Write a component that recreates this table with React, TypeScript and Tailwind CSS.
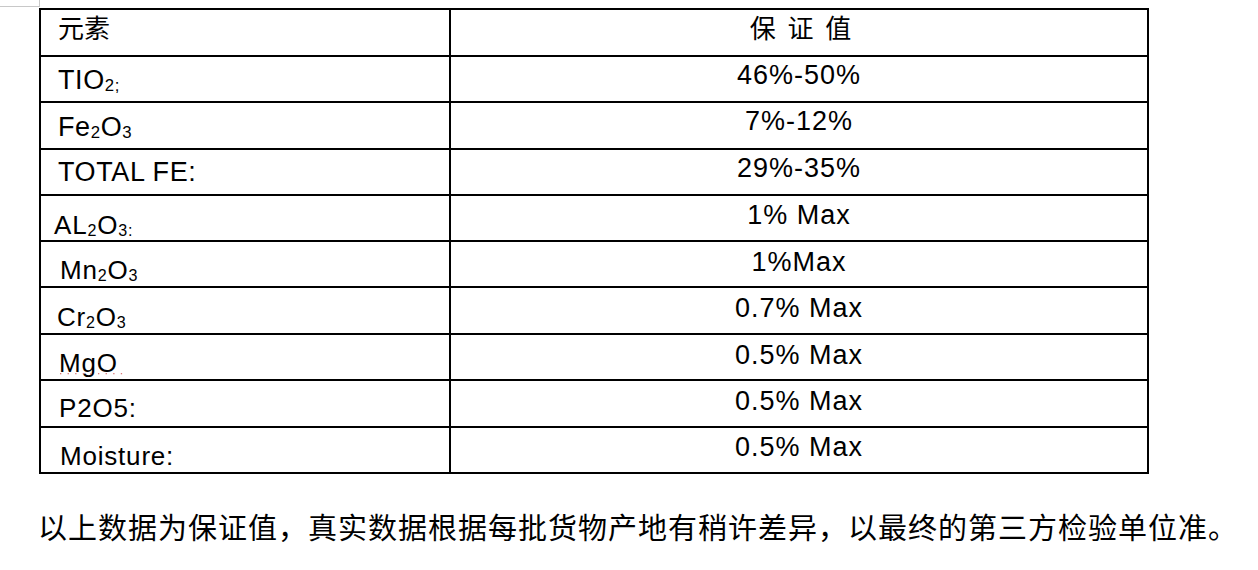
import React from "react";

type Row = {
  left: React.ReactNode;
  right: React.ReactNode;
  h: string;
  lcls: string;
  rcls: string;
};

const Sub = ({ children }: { children: React.ReactNode }) => (
  <span className="text-[0.62em] align-[-2px]">{children}</span>
);

const rows: Row[] = [
  {
    left: <span className="font-['Noto_Sans_CJK_SC',sans-serif] text-[26px]">元素</span>,
    right: (
      <span className="font-['Noto_Sans_CJK_SC',sans-serif] text-[26px] tracking-[3px]">保 证 值</span>
    ),
    h: "h-[46.7px]",
    lcls: "pt-[4px] pl-[17px]",
    rcls: "pt-[4px] pl-[6px]",
  },
  {
    left: (
      <span>
        TIO<Sub>2;</Sub>
      </span>
    ),
    right: "46%-50%",
    h: "h-[46.3px]",
    lcls: "pt-[10px] pl-[17px] text-[27px] tracking-[0.6px]",
    rcls: "pt-[5px]",
  },
  {
    left: (
      <span>
        Fe<Sub>2</Sub>O<Sub>3</Sub>
      </span>
    ),
    right: "7%-12%",
    h: "h-[47px]",
    lcls: "pt-[11px] pl-[17px] text-[27px] tracking-[0.6px]",
    rcls: "pt-[5px]",
  },
  {
    left: "TOTAL FE:",
    right: "29%-35%",
    h: "h-[46px]",
    lcls: "pt-[9px] pl-[17px] text-[27px] tracking-[0.6px]",
    rcls: "pt-[5px]",
  },
  {
    left: (
      <span>
        AL<Sub>2</Sub>O<Sub>3:</Sub>
      </span>
    ),
    right: "1% Max",
    h: "h-[45.7px]",
    lcls: "pt-[16px] pl-[13px] text-[26px] tracking-[0.8px]",
    rcls: "pt-[6px]",
  },
  {
    left: (
      <span>
        Mn<Sub>2</Sub>O<Sub>3</Sub>
      </span>
    ),
    right: "1%Max",
    h: "h-[46px]",
    lcls: "pt-[15px] pl-[19px] text-[26px] tracking-[0.8px]",
    rcls: "pt-[7px]",
  },
  {
    left: (
      <span>
        Cr<Sub>2</Sub>O<Sub>3</Sub>
      </span>
    ),
    right: "0.7% Max",
    h: "h-[47.3px]",
    lcls: "pt-[16px] pl-[16px] text-[26px] tracking-[0.8px]",
    rcls: "pt-[7px]",
  },
  {
    left: (
      <span className="relative inline-block">
        MgO
        <svg className="absolute left-0 top-[23px]" width="68" height="3" viewBox="0 0 68 3">
          {Array.from({ length: 9 }).map((_, i) => (
            <rect key={i} x={1 + i * 7.6} y={0} width={1.3} height={1.3} fill="#d97a7a" />
          ))}
        </svg>
      </span>
    ),
    right: "0.5% Max",
    h: "h-[46px]",
    lcls: "pt-[15px] pl-[18px] text-[26px] tracking-[0.8px]",
    rcls: "pt-[7px]",
  },
  {
    left: "P2O5:",
    right: "0.5% Max",
    h: "h-[46.7px]",
    lcls: "pt-[14px] pl-[18px] text-[26px] tracking-[0.8px]",
    rcls: "pt-[7px]",
  },
  {
    left: "Moisture:",
    right: "0.5% Max",
    h: "h-[46px]",
    lcls: "pt-[15px] pl-[19px] text-[26px] tracking-[0.8px]",
    rcls: "pt-[6px]",
  },
];

export default function App() {
  return (
    <div className="w-[1258px] h-[570px] bg-white text-black overflow-hidden font-['Liberation_Sans','Noto_Sans_CJK_SC',sans-serif]">
      <div className="w-[40px] h-[7px] border-r border-b border-[#c8c8c8]" />
      <div className="ml-[39px] mt-[1px] w-[1110px] border-x-2 border-t-2 border-black">
        {rows.map((r, i) => (
          <div key={i} className={`flex border-b-2 border-black ${r.h}`}>
            <div className={`w-[410px] shrink-0 border-r-2 border-black leading-none ${r.lcls}`}>
              {r.left}
            </div>
            <div className={`flex-1 text-center leading-none text-[27px] tracking-[1px] ${r.rcls}`}>
              {r.right}
            </div>
          </div>
        ))}
      </div>
      <p className="ml-[38px] mt-[38px] leading-none text-[29px] tracking-[1px] font-['Noto_Sans_CJK_SC',sans-serif] whitespace-nowrap">
        以上数据为保证值，真实数据根据每批货物产地有稍许差异，以最终的第三方检验单位准。
      </p>
    </div>
  );
}
